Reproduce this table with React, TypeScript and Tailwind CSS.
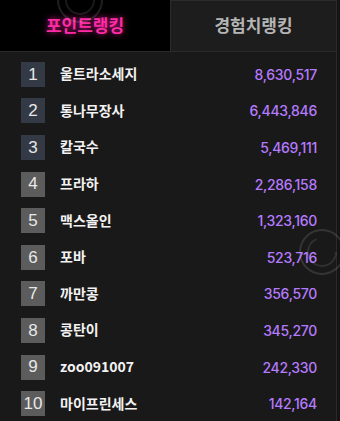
import React from "react";

const rows = [
  { name: "울트라소세지", point: "8,630,517" },
  { name: "통나무장사", point: "6,443,846" },
  { name: "칼국수", point: "5,469,111" },
  { name: "프라하", point: "2,286,158" },
  { name: "맥스올인", point: "1,323,160" },
  { name: "포바", point: "523,716" },
  { name: "까만콩", point: "356,570" },
  { name: "콩탄이", point: "345,270" },
  { name: "zoo091007", point: "242,330" },
  { name: "마이프린세스", point: "142,164" },
];

function Ring({ className }: { className: string }) {
  return (
    <svg className={className} viewBox="0 0 60 60" fill="none">
      <circle cx="30" cy="30" r="22" stroke="#ffffff" strokeOpacity="0.12" strokeWidth="2" />
      <circle cx="30" cy="30" r="14" stroke="#ffffff" strokeOpacity="0.1" strokeWidth="2" strokeDasharray="60 30" />
    </svg>
  );
}

export default function App() {
  return (
    <div className="relative w-[340px] h-[421px] overflow-hidden bg-[#141414] font-['Noto_Sans_CJK_KR',sans-serif]">
      <div className="w-[337px] h-full flex flex-col border-r border-[#2a2a2a]">
        {/* tabs */}
        <div className="flex h-[51px] shrink-0">
          <div className="w-[170px] bg-black flex items-center justify-center">
            <span className="text-[17px] font-bold text-[#ff2aa6] [text-shadow:0_0_6px_rgba(255,40,170,0.8)] -mt-[2px]">
              포인트랭킹
            </span>
          </div>
          <div className="flex-1 bg-[#1d1d1d] border-t border-l border-[#2c2c2c] flex items-center justify-center">
            <span className="text-[17px] font-bold text-[#b5b5b5] -mt-[2px]">경험치랭킹</span>
          </div>
        </div>

        {/* list */}
        <div className="flex-1 bg-[#1a1919] border-t border-[#2a2a2a] pt-[4px] flex flex-col">
          {rows.map((r, i) => (
            <div key={i} className="h-[36.6px] shrink-0 flex items-center pl-[21px] pr-[19px]">
              <div
                className={
                  "w-[24px] h-[25px] flex items-center justify-center text-[17px] text-[#e8e8e8] font-['Liberation_Sans',sans-serif] " +
                  (i < 3 ? "bg-[#333a46]" : "bg-[#5c5c5c]")
                }
              >
                {i + 1}
              </div>
              <div className="ml-[15px] text-[14px] font-bold text-[#f2f2f2] -mt-[1px]">{r.name}</div>
              <div className="ml-auto text-[14px] font-medium text-[#b57bff] font-['Inter',sans-serif] tracking-[-0.3px]">
                {r.point}
              </div>
            </div>
          ))}
        </div>
      </div>

      <Ring className="absolute left-[50px] -top-[30px] w-[60px] h-[60px]" />
      <Ring className="absolute left-[292px] top-[222px] w-[60px] h-[60px]" />
    </div>
  );
}
